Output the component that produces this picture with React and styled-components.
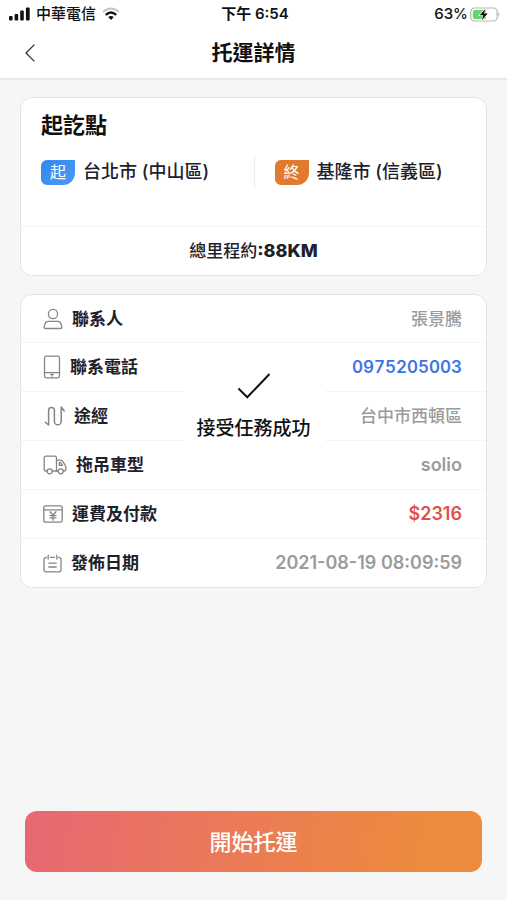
import React from "react";
import styled, { createGlobalStyle } from "styled-components";

const GlobalStyle = createGlobalStyle`
  * {
    box-sizing: border-box;
  }

  body {
    margin: 0;
    background-color: #f6f6f6;
    font-family: Inter, "Noto Sans CJK TC", sans-serif;
    line-height: 24px;
    color: #1c212b;
  }
`;

const Page = styled.div`
  display: flex;
  flex-direction: column;
  min-height: 100vh;
`;

const TopArea = styled.header`
  background-color: white;
  border-bottom: 2px solid #e9e9e9;
`;

const StatusBar = styled.div`
  display: grid;
  grid-template-columns: 1fr auto 1fr;
  align-items: center;
  height: 28px;
  padding: 0 6px 0 9px;
  font-size: 15px;
  line-height: 20px;
  font-weight: 600;
  color: #111;
`;

const StatusGroup = styled.div`
  display: flex;
  align-items: center;
  justify-content: ${({ $end }) => ($end ? "flex-end" : "flex-start")};
  gap: ${({ $gap }) => $gap}px;
`;

const Carrier = styled.span`
  font-weight: 500;
`;

const NavBar = styled.div`
  display: grid;
  grid-template-columns: 40px 1fr 40px;
  align-items: center;
  height: 50px;
  padding: 0 10px;
`;

const BackButton = styled.button`
  display: flex;
  align-items: center;
  justify-content: center;
  height: 40px;
  padding: 0;
  border: 0;
  background: none;
  color: #333;
  cursor: pointer;
`;

const Title = styled.h1`
  margin: 0;
  font-size: 21px;
  line-height: 28px;
  font-weight: 700;
  text-align: center;
  color: #111;
`;

const Content = styled.main`
  flex: 1;
  display: flex;
  flex-direction: column;
  gap: 18px;
  padding: 17px 20px;
`;

const Card = styled.section`
  position: relative;
  background-color: white;
  border: 1px solid #e4e4e4;
  border-radius: 12px;
`;

const CardTitle = styled.h2`
  margin: 0;
  padding: 11px 20px 0;
  font-size: 22px;
  line-height: 32px;
  font-weight: 700;
  color: #111;
`;

const Route = styled.div`
  display: grid;
  grid-template-columns: 1fr 1fr;
  padding: 15px 0 38px;
`;

const Stop = styled.div`
  display: flex;
  align-items: center;
  gap: 8px;
  height: 32px;
  padding-left: 20px;
  font-size: 18px;
  font-weight: 500;
  white-space: nowrap;

  & + & {
    border-left: 1px solid #ececec;
  }
`;

const StopBadge = styled.span`
  width: 34px;
  height: 25px;
  border-radius: 6px 0 12px 6px;
  background: ${({ $color }) => $color};
  color: white;
  font-size: 16px;
  line-height: 25px;
  font-weight: 400;
  text-align: center;
`;

const Distance = styled.p`
  margin: 0;
  border-top: 1px solid #f5f5f5;
  font-size: 17px;
  line-height: 48px;
  font-weight: 500;
  text-align: center;

  strong {
    font-size: 18px;
    font-weight: 800;
  }
`;

const DetailList = styled.dl`
  margin: 0;
`;

const DetailRow = styled.div`
  display: flex;
  align-items: center;
  justify-content: space-between;
  height: 49px;
  padding: 0 24px 0 22px;

  &:not(:last-child) {
    border-bottom: 1px solid #f4f4f4;
  }

  &:first-child,
  &:last-child {
    height: 48px;
  }
`;

const Label = styled.dt`
  display: flex;
  align-items: center;
  gap: 9px;
  font-size: 17px;
  font-weight: 600;

  svg {
    flex: none;
    color: #858585;
  }
`;

const Value = styled.dd`
  margin: 0;
  font-size: ${({ $cjk }) => ($cjk ? 17 : 18)}px;
  font-weight: ${({ $cjk }) => ($cjk ? 500 : 600)};
  color: ${({ $color }) => $color || "#9b9b9b"};
`;

const PhoneLink = styled.a`
  font-size: 17px;
  font-variant-numeric: tabular-nums;
  color: #3b74e6;
  text-decoration: none;
`;

const Toast = styled.div`
  position: absolute;
  top: 56px;
  left: 50%;
  transform: translateX(-50%);
  display: flex;
  flex-direction: column;
  align-items: center;
  gap: 16px;
  padding: 22px 14px 6px;
  background-color: white;
  font-size: 19px;
  line-height: 28px;
  font-weight: 500;
  color: #111;
  white-space: nowrap;
`;

const Footer = styled.footer`
  padding: 0 25px 28px;
`;

const StartButton = styled.button`
  width: 100%;
  height: 61px;
  border: 0;
  border-radius: 12px;
  background: linear-gradient(100deg, #e76874, #ee8b3c 88%);
  color: white;
  font-family: inherit;
  font-size: 22px;
  line-height: 32px;
  font-weight: 500;
  cursor: pointer;
`;

const lineProps = {
  fill: "none",
  stroke: "currentColor",
  strokeWidth: 1.3,
  strokeLinecap: "round",
  strokeLinejoin: "round",
  "aria-hidden": true,
};

const SignalIcon = () => (
  <svg width="21" height="14" viewBox="0 0 21 14" fill="#111" aria-hidden>
    <rect x="0" y="9" width="3.6" height="4.4" rx="1" />
    <rect x="5.6" y="7" width="3.6" height="6.4" rx="1" />
    <rect x="11.2" y="3.6" width="3.6" height="9.8" rx="1" />
    <rect x="16.9" y="0.4" width="3.8" height="13" rx="1" />
  </svg>
);

const WifiIcon = () => (
  <svg width="18" height="14" viewBox="0 0 18 14" fill="none" aria-hidden>
    <path d="M1 5 Q9 -2 17 5" stroke="#c4c4c4" strokeWidth="1.8" />
    <path d="M3.8 7.8 Q9 3.2 14.2 7.8" stroke="#111" strokeWidth="2.4" />
    <path d="M6.2 10 Q9 7.8 11.8 10 L9 13Z" fill="#111" />
  </svg>
);

const BatteryIcon = () => (
  <svg width="31" height="15" viewBox="0 0 31 15" fill="none" aria-hidden>
    <rect x="0.8" y="1" width="26.4" height="13" rx="3.6" stroke="#b5b5b5" strokeWidth="1.2" />
    <path d="M28.4 5.2Q30.6 7.5 28.4 9.8Z" fill="#b5b5b5" />
    <path d="M4.5 3H16V12H4.5Q2.8 12 2.8 10V5Q2.8 3 4.5 3Z" fill="#66d36e" />
    <path d="M15.3 2 9.6 8.3H13.2L11.8 13.2 17.8 6.6H14.2Z" fill="#111" stroke="white" strokeWidth="1.4" paintOrder="stroke" />
  </svg>
);

const BackIcon = () => (
  <svg {...lineProps} width="12" height="18" viewBox="0 0 12 18" strokeLinecap="butt">
    <path d="M10.4 0.6 2 9l8.4 8.4" />
  </svg>
);

const PersonIcon = () => (
  <svg {...lineProps} width="20" height="22" viewBox="0 0 20 22">
    <circle cx="10" cy="6" r="4.6" />
    <path d="M5.3 13.4H14.7Q17.2 13.4 18 16L18.8 18.6Q19.2 20.5 17.3 20.5H2.7Q.8 20.5 1.2 18.6L2 16Q2.8 13.4 5.3 13.4Z" />
  </svg>
);

const PhoneIcon = () => (
  <svg {...lineProps} width="18" height="24" viewBox="0 0 18 24">
    <rect x="1.5" y="1.2" width="15" height="21.6" rx="1.8" />
    <path d="M1.5 17.6H16.5" />
    <path d="M7.8 19.4H10.2M9 19.4V21.2" />
  </svg>
);

const PathIcon = () => (
  <svg {...lineProps} width="22" height="20" viewBox="0 0 22 20" strokeWidth={1.5}>
    <path d="M2.3 16.2 5.6 19V4.4A2.9 2.9 0 0 1 11.4 4.4V15.4A3.4 3.4 0 0 0 18.2 15.4V1L21.2 5" />
  </svg>
);

const TruckIcon = () => (
  <svg {...lineProps} width="24" height="20" viewBox="0 0 24 20">
    <path d="M4 16H3Q1.2 16 1.2 14.2V3Q1.2 1.2 3 1.2H11.7Q13.5 1.2 13.5 3V16H9.4" />
    <path d="M13.5 5.2H17.4Q19 5.2 20 6.8L22.2 10.2Q22.8 11 22.8 12V14.5Q22.8 16 21.5 16H20.4M15 16H13.5" />
    <path d="M16.4 7.5V10.4H19.5M16.4 7.5H17.5L19.5 10.4" />
    <circle cx="6.7" cy="16.3" r="2.5" />
    <circle cx="17.7" cy="16.3" r="2.5" />
  </svg>
);

const FeeIcon = () => (
  <svg {...lineProps} width="20" height="18" viewBox="0 0 20 18">
    <rect x="0.8" y="0.8" width="18.4" height="16.4" rx="1.8" />
    <path d="M0.8 4.8H19.2" />
    <path d="M7 6.8 10 10 13 6.8M10 10V15.2M7 10.6H13M7 12.8H13" />
  </svg>
);

const DateIcon = () => (
  <svg {...lineProps} width="19" height="19" viewBox="0 0 19 19">
    <path d="M3.4 3.4Q1 3.4 1 5.4V16Q1 17.8 3 17.8H16Q18 17.8 18 16V5.4Q18 3.4 15.6 3.4M7.5 3.4H11.5" />
    <path d="M5.2 1.2V5M13.8 1.2V5M5.8 9.2H13.2M5.8 13H13.2" />
  </svg>
);

const CheckIcon = () => (
  <svg width="34" height="26" viewBox="0 0 34 26" fill="none" aria-hidden>
    <path d="M1.5 15.5 10.3 24.3 32.5 1" stroke="#111" strokeWidth="2" />
  </svg>
);

const details = [
  { label: "聯系人", value: "張景騰", icon: PersonIcon, cjk: true },
  { label: "聯系電話", value: "0975205003", icon: PhoneIcon, phone: true },
  { label: "途經", value: "台中市西頓區", icon: PathIcon, cjk: true },
  { label: "拖吊車型", value: "solio", icon: TruckIcon },
  { label: "運費及付款", value: "$2316", icon: FeeIcon, color: "#e3504a" },
  { label: "發佈日期", value: "2021-08-19 08:09:59", icon: DateIcon },
];

function App() {
  return (
    <Page>
      <GlobalStyle />
      <TopArea>
        <StatusBar>
          <StatusGroup $gap={6}>
            <SignalIcon />
            <Carrier>中華電信</Carrier>
            <WifiIcon />
          </StatusGroup>
          <span>下午 6:54</span>
          <StatusGroup $gap={2} $end>
            <Carrier>63%</Carrier>
            <BatteryIcon />
          </StatusGroup>
        </StatusBar>
        <NavBar>
          <BackButton type="button" aria-label="返回">
            <BackIcon />
          </BackButton>
          <Title>托運詳情</Title>
        </NavBar>
      </TopArea>

      <Content>
        <Card>
          <CardTitle>起訖點</CardTitle>
          <Route>
            <Stop>
              <StopBadge $color="linear-gradient(135deg, #3586ef, #4b9cf5)">起</StopBadge>
              台北市 (中山區)
            </Stop>
            <Stop>
              <StopBadge $color="#e17a2d">終</StopBadge>
              基隆市 (信義區)
            </Stop>
          </Route>
          <Distance>
            總里程約<strong>:88KM</strong>
          </Distance>
        </Card>

        <Card>
          <DetailList>
            {details.map(({ label, value, icon: Icon, cjk, phone, color }) => (
              <DetailRow key={label}>
                <Label>
                  <Icon />
                  {label}
                </Label>
                <Value $cjk={cjk} $color={color}>
                  {phone ? <PhoneLink href={`tel:${value}`}>{value}</PhoneLink> : value}
                </Value>
              </DetailRow>
            ))}
          </DetailList>
          <Toast role="status">
            <CheckIcon />
            接受任務成功
          </Toast>
        </Card>
      </Content>

      <Footer>
        <StartButton type="button">開始托運</StartButton>
      </Footer>
    </Page>
  );
}

export default App;
